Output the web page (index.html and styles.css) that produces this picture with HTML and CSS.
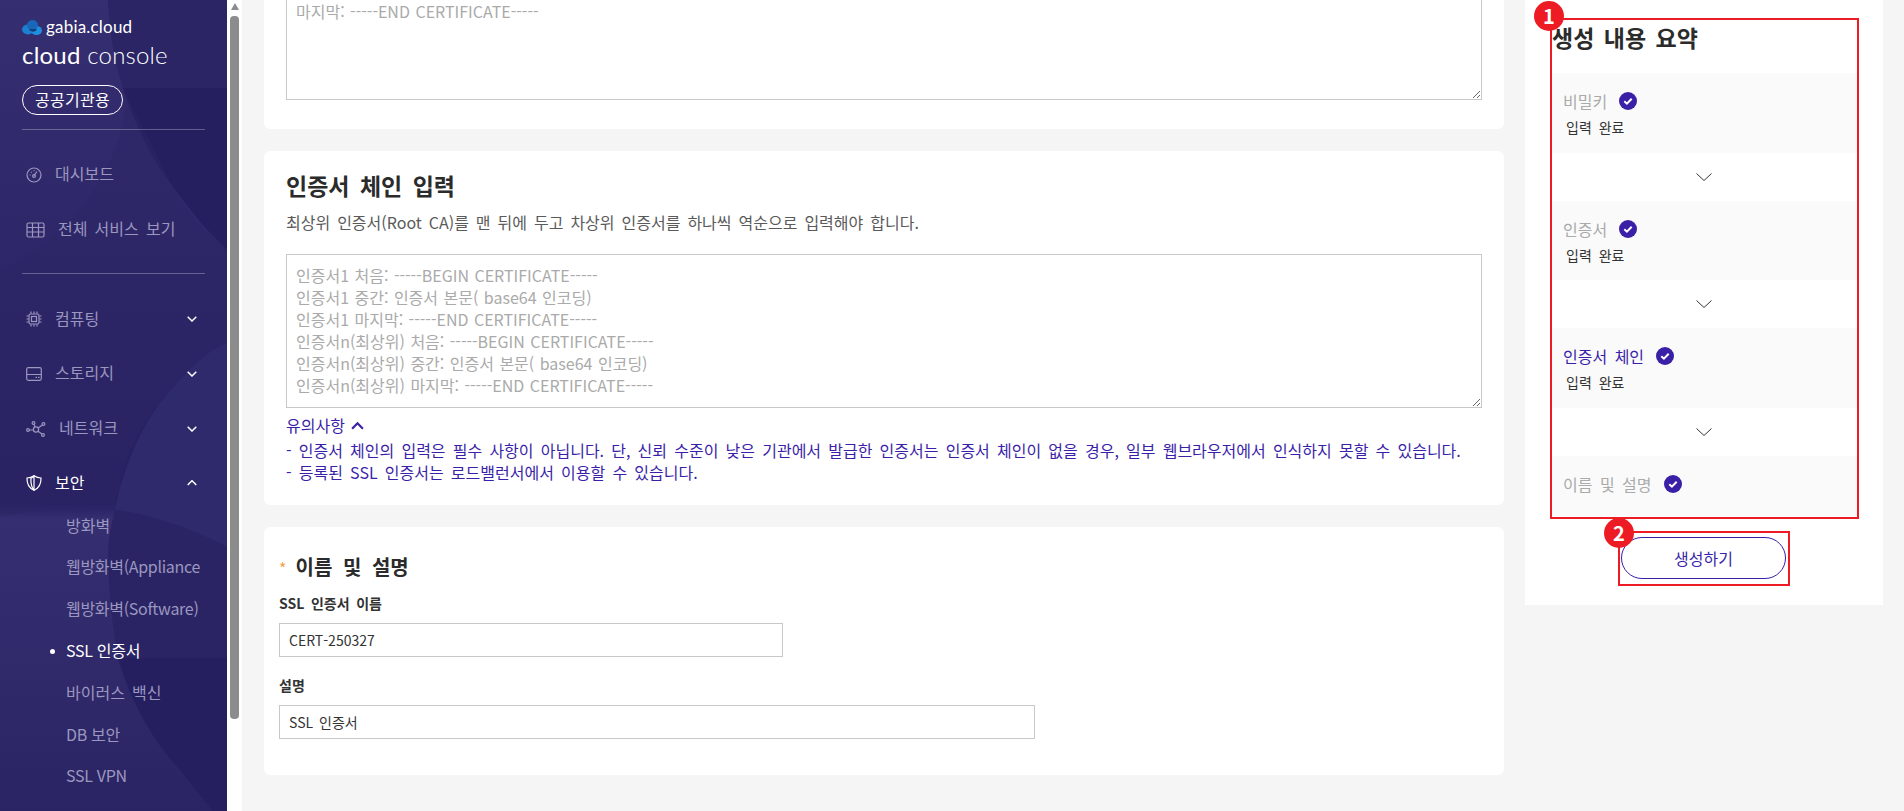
FILE: index.html
```html
<!DOCTYPE html>
<html lang="ko">
<head>
<meta charset="utf-8">
<title>SSL 인증서 생성</title>
<link rel="stylesheet" href="styles.css">
</head>
<body>
<div class="app">
  <aside class="sidebar">
    <svg class="side-bg" width="227" height="811" viewBox="0 0 227 811" aria-hidden="true">
      <defs>
        <linearGradient id="bgv" x1="0" y1="0" x2="0" y2="1">
          <stop offset="0" stop-color="#352e70"/>
          <stop offset="0.62" stop-color="#262061"/>
          <stop offset="0.64" stop-color="#352e70"/>
          <stop offset="1" stop-color="#2b2464"/>
        </linearGradient>
      </defs>
      <rect width="227" height="811" fill="url(#bgv)"/>
      <path d="M108 0C109 30 115 65 123 88L227 88V0Z" fill="#2b2566"/>
      <path d="M123 88C135 125 152 160 173 187C190 210 208 232 227 250V88Z" fill="#251f60"/>
      <path d="M227 250C205 235 180 205 173 187L123 88C135 160 60 250 0 270V516C40 508 80 508 115 510C120 470 140 420 160 403C180 375 205 355 227 343Z" fill="#2c2566" opacity="0.5"/>
      <path d="M227 343C205 352 187 370 160 403C140 430 122 470 115 510C155 515 195 530 227 547Z" fill="#2f2a6b"/>
      <path d="M115 510C155 515 195 530 227 547V658H118C112 625 108 585 108 550C109 535 112 522 115 510Z" fill="#2a2465"/>
      <path d="M118 658C130 700 152 740 180 770C192 785 202 798 213 811H227V658Z" fill="#251f60"/>
    </svg>
    <div class="side-inner">
      <div class="logo-row">
        <svg class="logo-mark" width="20" height="15" viewBox="0 0 20 15" aria-hidden="true">
          <ellipse cx="6" cy="9.5" rx="6" ry="5" fill="#1c7fd0"/>
          <ellipse cx="14.5" cy="10.5" rx="5.5" ry="4.5" fill="#1f8fe0"/>
          <ellipse cx="10.5" cy="5" rx="5.5" ry="5" fill="#1a66b8"/>
          <path d="M7 9h8c-1 3-6 4-8 0Z" fill="#12407f"/>
        </svg>
        <span class="logo-text">gabia.cloud</span>
      </div>
      <div class="console-title"><b>cloud</b> console</div>
      <div class="pill">공공기관용</div>
      <div class="divider"></div>
      <nav class="nav-top">
        <a class="nav-row">
          <svg class="ico" viewBox="0 0 16 16" aria-hidden="true"><circle cx="8" cy="8" r="7" class="ln"/><path d="M8 8.500 11 4.500" class="ln"/><circle cx="8" cy="9" r="1.400" class="ln"/><path d="M3.600 8h1M5 5l.7.7M8 3.200v1" class="ln"/></svg>
          <span>대시보드</span>
        </a>
        <a class="nav-row">
          <svg class="ico ico-wide" viewBox="0 0 19 16" aria-hidden="true"><rect x="1" y="1" width="17" height="14" rx="1.500" class="ln"/><path d="M1 5.500h17M1 10h17M6.500 1v14M12.500 1v14" class="ln"/></svg>
          <span>전체 서비스 보기</span>
        </a>
      </nav>
      <div class="divider divider-2"></div>
      <nav class="nav-main">
        <a class="nav-row main">
          <svg class="ico" viewBox="0 0 16 16" aria-hidden="true"><rect x="3" y="3" width="10" height="10" rx="1.500" class="ln"/><rect x="5.500" y="5.500" width="5" height="5" class="ln"/><path d="M5 .5v2M8 .5v2M11 .5v2M5 13.500v2M8 13.500v2M11 13.500v2M.5 5h2M.5 8h2M.5 11h2M13.500 5h2M13.500 8h2M13.500 11h2" class="ln"/></svg>
          <span>컴퓨팅</span>
          <svg class="chev" viewBox="0 0 10 6" aria-hidden="true"><path d="M.7.7 5 5 9.300.7"/></svg>
        </a>
        <a class="nav-row main">
          <svg class="ico" viewBox="0 0 16 14" aria-hidden="true"><rect x=".7" y=".7" width="14.600" height="12.600" rx="1.500" class="ln"/><path d="M.7 7.500h14.600M9.500 10.300h1.500M12 10.300h1.500" class="ln"/></svg>
          <span>스토리지</span>
          <svg class="chev" viewBox="0 0 10 6" aria-hidden="true"><path d="M.7.7 5 5 9.300.7"/></svg>
        </a>
        <a class="nav-row main">
          <svg class="ico ico-net" viewBox="0 0 20 16" aria-hidden="true"><circle cx="10" cy="8.500" r="2.600" class="ln"/><circle cx="7.500" cy="2" r="1.400" class="ln"/><circle cx="2" cy="9" r="1.400" class="ln"/><circle cx="17.500" cy="3" r="1.400" class="ln"/><circle cx="17" cy="14" r="1.400" class="ln"/><path d="M8.200 3.300 9 6M3.400 9h4M12.200 7l4.200-3M12 10.300l4 2.800" class="ln"/></svg>
          <span>네트워크</span>
          <svg class="chev" viewBox="0 0 10 6" aria-hidden="true"><path d="M.7.7 5 5 9.300.7"/></svg>
        </a>
        <a class="nav-row main active">
          <svg class="ico" viewBox="0 0 16 16" aria-hidden="true"><path d="M8 .8C10.200 2.300 12.500 3 15 3c.2 6-1.800 10-7 12.300C2.800 13 .8 9 1 3c2.500 0 4.800-.7 7-2.200Z" class="ln"/><path d="M8 1v14C5.600 12.500 4.700 8 5 3.200 6.100 2.800 7 2 8 1Z" class="ln"/></svg>
          <span>보안</span>
          <svg class="chev" viewBox="0 0 10 6" aria-hidden="true"><path d="M.7 5 5 .7 9.300 5"/></svg>
        </a>
      </nav>
      <ul class="sub">
        <li>방화벽</li>
        <li class="lat">웹방화벽(Appliance</li>
        <li class="lat">웹방화벽(Software)</li>
        <li class="on lat">SSL 인증서</li>
        <li>바이러스 백신</li>
        <li class="lat">DB 보안</li>
        <li class="lat">SSL VPN</li>
      </ul>
    </div>
  </aside>
  <div class="scrollbar">
    <div class="sb-arrow"></div>
    <div class="sb-thumb"></div>
  </div>
  <main class="main-area">
    <div class="cards">
      <section class="card card-first">
        <textarea class="ta ta-first" placeholder="마지막: -----END CERTIFICATE-----"></textarea>
      </section>
      <section class="card card-chain">
        <h2 class="h-chain">인증서 체인 입력</h2>
        <p class="desc">최상위 인증서(Root CA)를 맨 뒤에 두고 차상위 인증서를 하나씩 역순으로 입력해야 합니다.</p>
        <textarea class="ta ta-chain" placeholder="인증서1 처음: -----BEGIN CERTIFICATE-----
인증서1 중간: 인증서 본문( base64 인코딩)
인증서1 마지막: -----END CERTIFICATE-----
인증서n(최상위) 처음: -----BEGIN CERTIFICATE-----
인증서n(최상위) 중간: 인증서 본문( base64 인코딩)
인증서n(최상위) 마지막: -----END CERTIFICATE-----"></textarea>
        <div class="note-head">유의사항
          <svg class="note-chev" viewBox="0 0 12 8" aria-hidden="true"><path d="M1 7 6 2l5 5"/></svg>
        </div>
        <p class="note">- 인증서 체인의 입력은 필수 사항이 아닙니다. 단, 신뢰 수준이 낮은 기관에서 발급한 인증서는 인증서 체인이 없을 경우, 일부 웹브라우저에서 인식하지 못할 수 있습니다.</p>
        <p class="note">- 등록된 SSL 인증서는 로드밸런서에서 이용할 수 있습니다.</p>
      </section>
      <section class="card card-name">
        <h2 class="h-name"><span class="star">*</span>이름 및 설명</h2>
        <label class="f-label f-label-1">SSL 인증서 이름</label>
        <input class="inp inp-short" type="text" value="CERT-250327">
        <label class="f-label f-label-2">설명</label>
        <input class="inp inp-long" type="text" value="SSL 인증서">
      </section>
    </div>
    <aside class="panel">
      <h2 class="h-sum">생성 내용 요약</h2>
      <div class="step step-full">
        <div class="step-title">비밀키<svg class="chk" viewBox="0 0 18 18" aria-hidden="true"><circle cx="9" cy="9" r="9"/><path d="M5.300 9.300 7.900 11.700 12.700 6.800"/></svg></div>
        <div class="step-sub">입력 완료</div>
      </div>
      <svg class="arrow" viewBox="0 0 16 8" aria-hidden="true"><path d="M.5.5 8 7.500 15.500.5"/></svg>
      <div class="step step-full">
        <div class="step-title">인증서<svg class="chk" viewBox="0 0 18 18" aria-hidden="true"><circle cx="9" cy="9" r="9"/><path d="M5.300 9.300 7.900 11.700 12.700 6.800"/></svg></div>
        <div class="step-sub">입력 완료</div>
      </div>
      <svg class="arrow" viewBox="0 0 16 8" aria-hidden="true"><path d="M.5.5 8 7.500 15.500.5"/></svg>
      <div class="step step-full">
        <div class="step-title current">인증서 체인<svg class="chk" viewBox="0 0 18 18" aria-hidden="true"><circle cx="9" cy="9" r="9"/><path d="M5.300 9.300 7.900 11.700 12.700 6.800"/></svg></div>
        <div class="step-sub">입력 완료</div>
      </div>
      <svg class="arrow" viewBox="0 0 16 8" aria-hidden="true"><path d="M.5.5 8 7.500 15.500.5"/></svg>
      <div class="step step-short">
        <div class="step-title">이름 및 설명<svg class="chk" viewBox="0 0 18 18" aria-hidden="true"><circle cx="9" cy="9" r="9"/><path d="M5.300 9.300 7.900 11.700 12.700 6.800"/></svg></div>
      </div>
      <button class="create" type="button">생성하기</button>
      <div class="mark mark-box-1"></div>
      <div class="mark mark-box-2"></div>
      <div class="badge badge-1">1</div>
      <div class="badge badge-2">2</div>
    </aside>
  </main>
</div>
</body>
</html>
```

FILE: styles.css
```css
* { box-sizing: border-box; }
html, body { margin: 0; height: 100%; overflow: hidden; }
body { font-family: "Noto Sans CJK KR", "Noto Sans", sans-serif; font-size: 16px; word-spacing: 2.7px; color: #333; background: #f5f5f5; }
h2, p, ul { margin: 0; padding: 0; }
.app { display: flex; height: 811px; }

/* Sidebar */
.sidebar { position: relative; width: 227px; flex: none; overflow: hidden; background: #2a2463; }
.side-bg { position: absolute; left: 0; top: 0; }
.side-inner { position: relative; padding: 18px 0 0 22px; width: 227px; }
.logo-row { display: flex; align-items: center; height: 18px; gap: 4px; }
.logo-mark { flex: none; }
.logo-text { font-family: "Lato", sans-serif; font-weight: 400; font-size: 17px; line-height: 18px; color: #fff; letter-spacing: .2px; word-spacing: 0; }
.console-title { margin-top: 5px; height: 28px; font-family: "Lato", sans-serif; font-weight: 300; font-size: 24px; line-height: 28px; color: #fff; letter-spacing: .2px; word-spacing: 0; white-space: nowrap; }
.console-title b { font-weight: 400; }
.pill { margin-top: 16px; width: 101px; height: 30px; border: 1px solid #fff; border-radius: 15px; color: #fff; font-size: 16px; line-height: 26px; text-align: center; letter-spacing: .3px; }
.divider { margin-top: 14px; width: 183px; height: 1px; background: rgba(255,255,255,.28); }
.divider-2 { margin-top: 16px; }
.nav-top { margin-top: 17px; width: 183px; }
.nav-row { display: flex; align-items: center; height: 55px; padding: 0 8px 0 4px; color: #9b97bf; line-height: 22px; }
.nav-row span { margin-top: -3px; }
.main { height: 54.67px; }
.active { color: #fff; }
.ico { width: 16px; height: 16px; flex: none; margin-right: 13px; }
.ico-wide { width: 19px; margin-right: 13px; }
.ico-net { width: 20px; }
.ln { fill: none; stroke: #9b97bf; stroke-width: 1.2; }
.active .ln { stroke: #fff; }
.chev { width: 10px; height: 6px; margin-left: auto; flex: none; fill: none; stroke: #fff; stroke-width: 1.5; }
.nav-main { margin-top: 18px; width: 183px; }
.sub { list-style: none; margin: -5px 0 0 44px; width: 160px; }
.sub li { position: relative; height: 41.8px; line-height: 39px; color: #9b97bf; white-space: nowrap; }
.sub .lat { word-spacing: 0; letter-spacing: -.3px; }
.sub .on { color: #fff; }
.sub .on::before { content: ""; position: absolute; left: -16px; top: 18px; width: 5px; height: 5px; border-radius: 50%; background: #fff; }

/* Scrollbar */
.scrollbar { width: 15px; flex: none; background: #fff; padding: 3px 3px 0; }
.sb-arrow { width: 0; height: 0; margin: 0 auto; border-left: 4.5px solid transparent; border-right: 4.5px solid transparent; border-bottom: 7px solid #8c8c8c; }
.sb-thumb { margin-top: 6px; width: 9px; height: 703px; border-radius: 4px; background: #8c8c8c; }

/* Main */
.main-area { flex: 1; display: flex; align-items: flex-start; padding-left: 22px; min-width: 0; }
.cards { width: 1240px; flex: none; display: flex; flex-direction: column; gap: 22px; }
.card { background: #fff; border-radius: 6px; }
.card-first { height: 129px; padding: 0 22px; border-radius: 0 0 6px 6px; }
.card-chain { height: 354px; padding: 20px 22px 22px; }
.card-name { height: 248px; padding: 25px 15px 0; }
.ta { display: block; width: 100%; border: 1px solid #c8c8c8; padding: 9px 9px; font: inherit; word-spacing: 1px; line-height: 22px; color: #333; background: #fff; outline: none; }
.ta::placeholder { color: #aaa; opacity: 1; }
.ta-first { height: 100px; border-top: 0; padding-top: 0; }
.ta-chain { height: 154px; margin-top: 21px; overflow: hidden; }
.h-chain { font-size: 23px; line-height: 28px; font-weight: 700; color: #2b2b2b; word-spacing: 4px; }
.desc { margin-top: 12px; line-height: 22px; color: #5a5a5a; word-spacing: 2.5px; }
.note-head { display: flex; align-items: center; gap: 6px; margin-top: 6px; line-height: 22px; color: #3b1fa8; }
.note-chev { width: 13px; height: 9px; fill: none; stroke: #3b1fa8; stroke-width: 2; }
.note { line-height: 22px; color: #3b1fa8; white-space: nowrap; }
.note-head + .note { margin-top: 3px; }
.h-name { font-size: 20px; line-height: 30px; font-weight: 700; color: #2b2b2b; word-spacing: 5px; }
.star { color: #f5a04a; font-weight: 400; font-size: 16px; margin-right: 9px; }
.f-label { display: block; font-size: 14px; font-weight: 700; line-height: 20px; color: #333; }
.f-label-1 { margin-top: 10px; }
.f-label-2 { margin-top: 18px; }
.inp { display: block; height: 34px; border: 1px solid #c8c8c8; padding: 0 9px; font: inherit; font-size: 14px; word-spacing: 2px; color: #333; background: #fff; outline: none; }
.inp-short { width: 504px; margin-top: 10px; }
.inp-long { width: 756px; margin-top: 10px; }

/* Panel */
.panel { position: relative; width: 358px; height: 605px; margin-left: 21px; flex: none; padding: 22px 26px 0 27px; background: #fff; }
.h-sum { font-size: 23px; line-height: 30px; font-weight: 700; color: #2b2b2b; word-spacing: 3px; }
.step { background: #fafafa; padding: 17px 0 0 11px; }
.h-sum + .step { margin-top: 21px; }
.step-full { height: 79.5px; }
.step-short { height: 60px; }
.step-title { display: flex; align-items: center; line-height: 22px; color: #aaa; word-spacing: 3px; }
.step-title.current { color: #3b1fa8; }
.chk { width: 18px; height: 18px; margin-left: 12px; flex: none; }
.chk circle { fill: #3a1fa7; }
.chk path { fill: none; stroke: #fff; stroke-width: 2; }
.step-sub { margin: 4px 0 0 3px; font-size: 14px; line-height: 22px; color: #333; word-spacing: 3px; }
.arrow { display: block; width: 16px; height: 8px; margin: 20px 0 20px 144px; fill: none; stroke: #333; stroke-width: 1; }
.create { display: block; width: 165px; height: 42px; margin: 21px 0 0 69px; border: 1px solid #3b1fa8; border-radius: 21px; background: #fff; color: #3b1fa8; font: inherit; }
.mark { position: absolute; border: 2px solid #ed1c24; pointer-events: none; }
.mark-box-1 { left: 25px; top: 18px; width: 309px; height: 501px; }
.mark-box-2 { left: 93px; top: 531px; width: 172px; height: 55px; }
.badge { position: absolute; width: 30px; height: 30px; border-radius: 50%; background: #ed1c24; color: #fff; font-size: 20px; font-weight: 700; line-height: 29px; text-align: center; }
.badge-1 { left: 9px; top: 1px; }
.badge-2 { left: 79px; top: 518px; }
```
